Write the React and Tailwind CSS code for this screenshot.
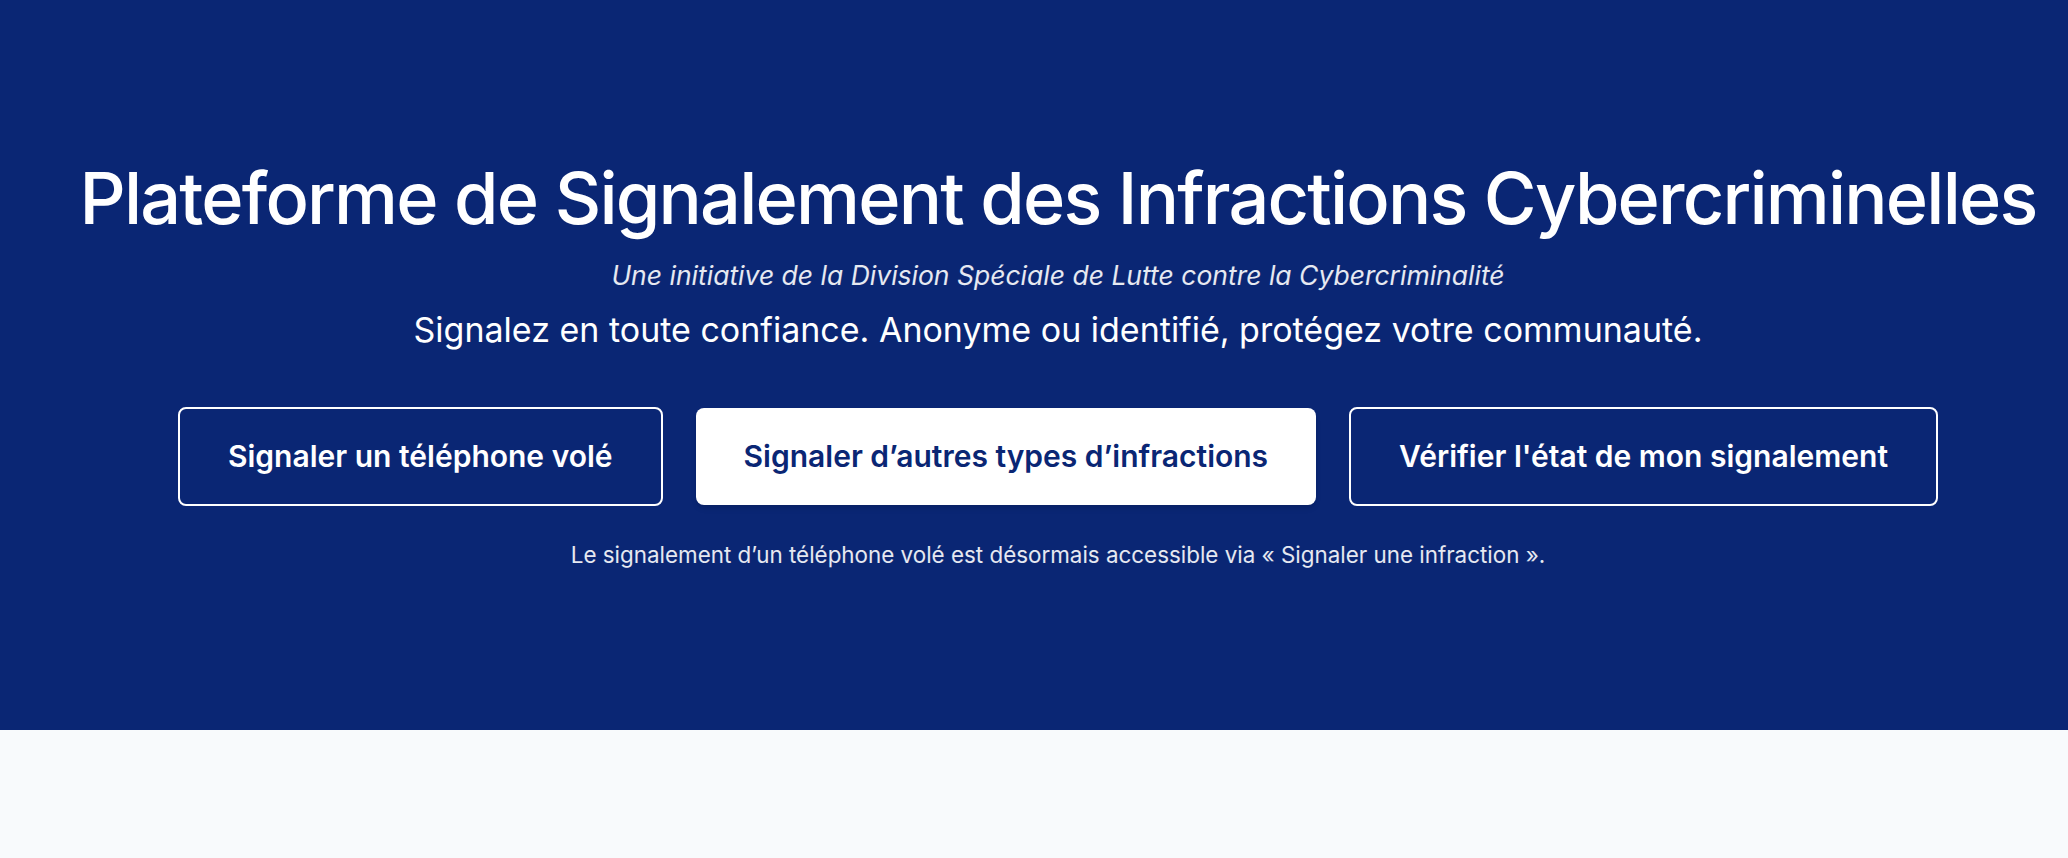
export default function App() {
    return (
        <div className="min-h-[858px] bg-[#f8fafc]">
            <section className="h-[730px] bg-[#0a2674] flex items-center justify-center pl-12 font-['Inter',sans-serif] text-white">
                <div className="flex flex-col items-center text-center">
                    <h1 className="mt-1 text-[72px] leading-none font-medium tracking-tight">
                        Plateforme de Signalement des Infractions Cybercriminelles
                    </h1>
                    <p className="mt-[25px] text-[26.5px] leading-tight italic text-white/90">
                        Une initiative de la Division Spéciale de Lutte contre la Cybercriminalité
                    </p>
                    <p className="mt-4 text-[34px] leading-tight">
                        Signalez en toute confiance. Anonyme ou identifié, protégez votre communauté.
                    </p>

                    {/* Actions */}
                    <div className="mt-14 flex items-center gap-[33px]">
                        <button className="h-[99px] px-[48px] rounded-lg border-2 border-white text-[30px] font-semibold text-white">
                            Signaler un téléphone volé
                        </button>
                        <button className="h-[97px] px-[48px] rounded-lg bg-white text-[30px] font-semibold text-[#0a2674] shadow-md">
                            Signaler d’autres types d’infractions
                        </button>
                        <button className="h-[99px] px-[48px] rounded-lg border-2 border-white text-[30px] font-semibold text-white">
                            Vérifier l'état de mon signalement
                        </button>
                    </div>

                    <p className="mt-8 text-[22.4px] text-white/90">
                        Le signalement d’un téléphone volé est désormais accessible via « Signaler une infraction ».
                    </p>
                </div>
            </section>
        </div>
    );
}
